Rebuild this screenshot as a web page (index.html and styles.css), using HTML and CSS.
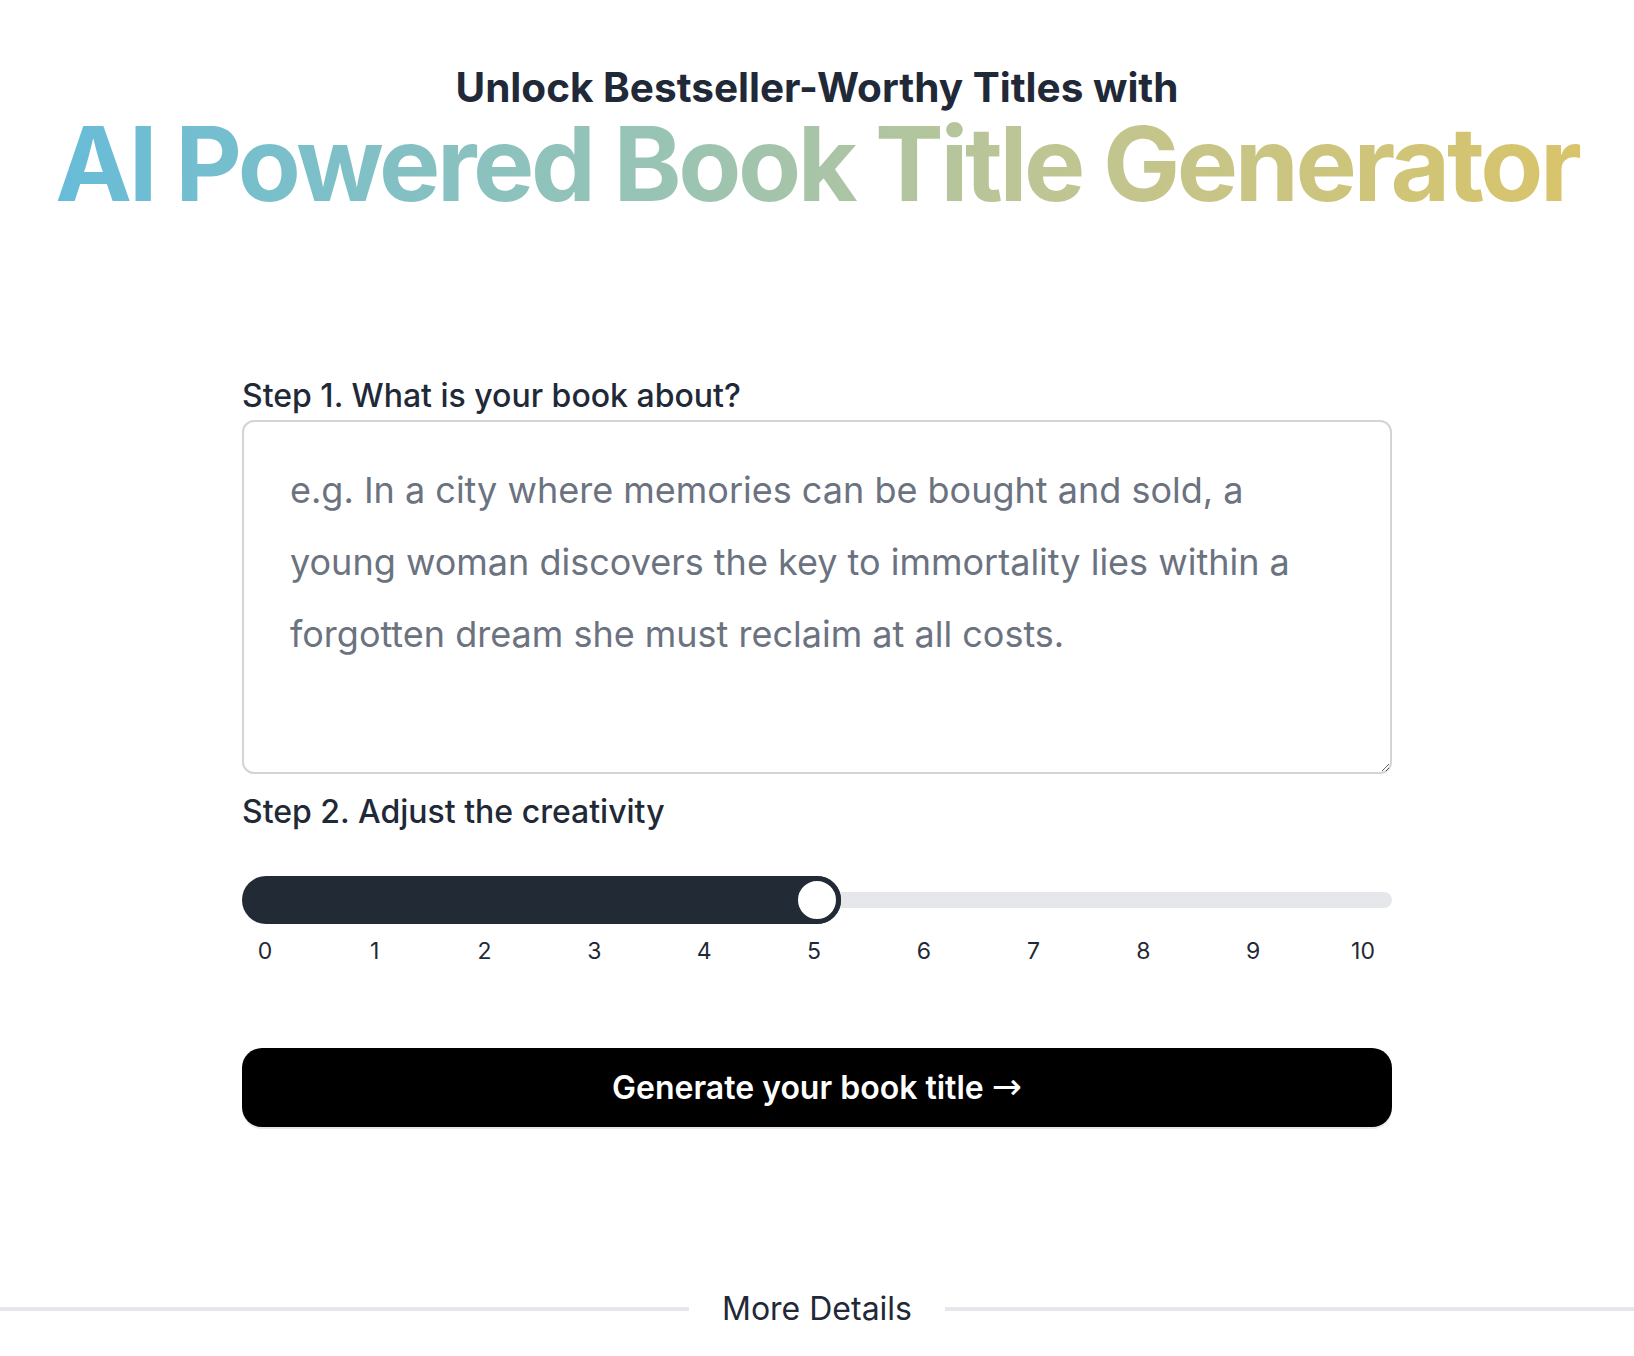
FILE: index.html
```html
<!DOCTYPE html>
<html lang="en">
<head>
<meta charset="utf-8">
<title>AI Powered Book Title Generator</title>
<link rel="stylesheet" href="styles.css">
</head>
<body>
<header class="hero">
  <h2 class="hero-kicker">Unlock Bestseller-Worthy Titles with</h2>
  <h1 class="hero-title">AI Powered Book Title Generator</h1>
</header>

<main class="form">
  <label class="step-label" for="about">Step 1. What is your book about?</label>
  <textarea id="about" class="about-input" placeholder="e.g. In a city where memories can be bought and sold, a young woman discovers the key to immortality lies within a forgotten dream she must reclaim at all costs."></textarea>

  <div class="step-label step-two">Step 2. Adjust the creativity</div>
  <div class="slider" role="slider" aria-valuemin="0" aria-valuemax="10" aria-valuenow="5">
    <div class="slider-track"></div>
    <div class="slider-fill"></div>
    <div class="slider-thumb"></div>
  </div>
  <div class="ticks">
    <span>0</span><span>1</span><span>2</span><span>3</span><span>4</span><span>5</span><span>6</span><span>7</span><span>8</span><span>9</span><span>10</span>
  </div>

  <button class="generate" type="button">Generate your book title <span class="arrow">→</span></button>
</main>

<section class="more">
  <span class="more-line"></span>
  <span class="more-text">More Details</span>
  <span class="more-line"></span>
</section>
</body>
</html>
```

FILE: styles.css
```css
* { box-sizing: border-box; }

body {
  margin: 0;
  font-family: Inter, "Noto Sans", "Liberation Sans", sans-serif;
  color: #1f2937;
  background: #ffffff;
}

.hero {
  padding-top: 66px;
  text-align: center;
}

.hero-kicker {
  margin: 0;
  font-size: 40.5px;
  line-height: 43px;
  font-weight: 700;
  color: #1f2937;
}

.hero-title {
  margin: 9px 0 0;
  font-size: 103px;
  line-height: 92px;
  font-weight: 700;
  letter-spacing: -3.4px;
  background: linear-gradient(90deg, #67bcd8 0%, #99c4b4 40%, #bfc593 65%, #d9c46a 100%);
  -webkit-background-clip: text;
  background-clip: text;
  color: transparent;
  display: inline-block;
  padding: 0 4px 4px;
}

.form {
  width: 1150px;
  margin: 161px auto 0;
  display: flex;
  flex-direction: column;
}

.step-label {
  font-size: 32px;
  line-height: 42px;
  font-weight: 500;
  color: #1f2937;
}

.about-input {
  margin-top: 3px;
  width: 100%;
  height: 354px;
  border: 2px solid #d4d4d8;
  border-radius: 12px;
  padding: 32px 70px 32px 46px;
  font-family: inherit;
  font-size: 36px;
  line-height: 72px;
  color: #1f2937;
  resize: vertical;
  outline: none;
}

.about-input::placeholder {
  color: #6b7280;
}

.step-two {
  margin-top: 17px;
}

.slider {
  position: relative;
  margin-top: 43px;
  height: 48px;
}

.slider-track {
  position: absolute;
  left: 0;
  right: 0;
  top: 16px;
  height: 16px;
  border-radius: 8px;
  background: #e5e7eb;
}

.slider-fill {
  position: absolute;
  left: 0;
  top: 0;
  height: 48px;
  width: calc(50% + 24px);
  border-radius: 24px;
  background: #212a35;
}

.slider-thumb {
  position: absolute;
  top: 0;
  left: calc(50% - 24px);
  width: 48px;
  height: 48px;
  border-radius: 50%;
  background: #ffffff;
  border: 5px solid #212a35;
}

.ticks {
  margin-top: 10px;
  display: flex;
  justify-content: space-between;
  padding: 0 14px 0 8px;
  font-size: 23px;
  line-height: 34px;
  color: #1f2937;
}

.ticks span {
  width: 30px;
  text-align: center;
}

.generate {
  margin-top: 80px;
  height: 79px;
  width: 100%;
  border: none;
  border-radius: 20px;
  background: #000000;
  color: #ffffff;
  font-family: inherit;
  font-size: 32px;
  font-weight: 600;
  cursor: pointer;
  box-shadow: 0 2px 0 #e5e7eb;
}

.arrow {
  font-family: "DejaVu Sans", "Noto Sans", sans-serif;
  font-size: 36px;
  font-weight: 400;
  line-height: 1;
}

.more {
  margin-top: 161px;
  display: flex;
  align-items: center;
  gap: 33px;
}

.more-line {
  flex: 1;
  height: 4px;
  background: #e5e7eb;
}

.more-text {
  font-size: 32px;
  line-height: 42px;
  color: #1f2937;
}
```
